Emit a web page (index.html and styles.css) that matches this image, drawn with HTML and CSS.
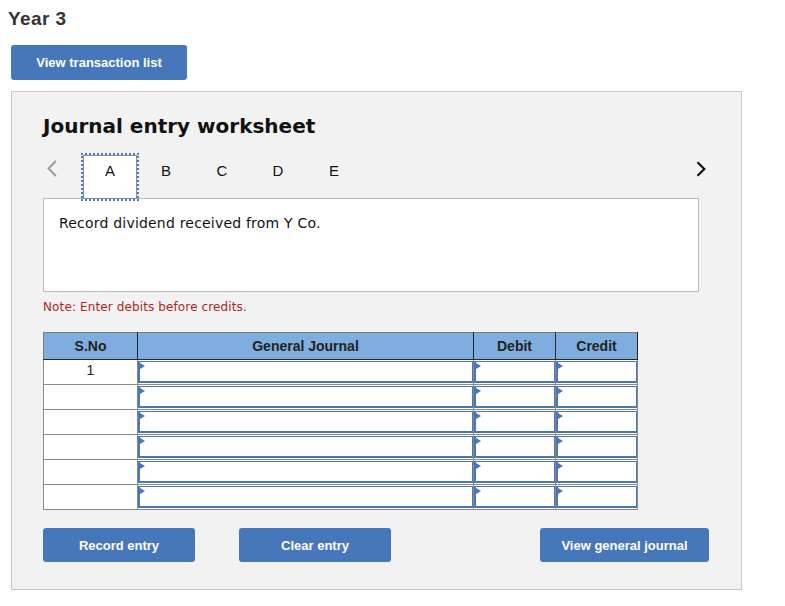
FILE: index.html
```html
<!DOCTYPE html>
<html>
<head>
<meta charset="utf-8">
<link rel="stylesheet" href="styles.css">
</head>
<body>
<div class="page">
  <h1 class="year">Year 3</h1>
  <button class="btn btn-list">View transaction list</button>
  <div class="panel">
    <h2 class="title">Journal entry worksheet</h2>
    <div class="tabs">
      <span class="arrow-left">
        <svg width="10" height="17" viewBox="0 0 10 17"><polyline points="8.8,1 1.6,8.5 8.8,16" fill="none" stroke="#9c9c9c" stroke-width="2"/></svg>
      </span>
      <div class="tab tab-active">A</div>
      <div class="tab">B</div>
      <div class="tab">C</div>
      <div class="tab">D</div>
      <div class="tab">E</div>
      <span class="arrow-right">
        <svg width="10" height="16" viewBox="0 0 10 16"><polyline points="1.5,1.2 8.3,8 1.5,14.8" fill="none" stroke="#111" stroke-width="2.2"/></svg>
      </span>
    </div>
    <div class="prompt">Record dividend received from Y Co.</div>
    <p class="note">Note: Enter debits before credits.</p>
    <table class="journal">
      <colgroup>
        <col class="col-sno">
        <col class="col-gj">
        <col class="col-amt">
        <col class="col-amt">
      </colgroup>
      <thead>
        <tr><th>S.No</th><th>General Journal</th><th>Debit</th><th>Credit</th></tr>
      </thead>
      <tbody>
        <tr><td class="sno">1</td><td><div class="entry"></div></td><td><div class="entry"></div></td><td><div class="entry"></div></td></tr>
        <tr><td class="sno"></td><td><div class="entry"></div></td><td><div class="entry"></div></td><td><div class="entry"></div></td></tr>
        <tr><td class="sno"></td><td><div class="entry"></div></td><td><div class="entry"></div></td><td><div class="entry"></div></td></tr>
        <tr><td class="sno"></td><td><div class="entry"></div></td><td><div class="entry"></div></td><td><div class="entry"></div></td></tr>
        <tr><td class="sno"></td><td><div class="entry"></div></td><td><div class="entry"></div></td><td><div class="entry"></div></td></tr>
        <tr><td class="sno"></td><td><div class="entry"></div></td><td><div class="entry"></div></td><td><div class="entry"></div></td></tr>
      </tbody>
    </table>
    <div class="actions">
      <button class="btn btn-record">Record entry</button>
      <button class="btn btn-clear">Clear entry</button>
      <button class="btn btn-journal">View general journal</button>
    </div>
  </div>
</div>
</body>
</html>
```

FILE: styles.css
```css
html, body {
  margin: 0;
  padding: 0;
  background: #ffffff;
}

.page {
  padding: 0 0 0 11px;
  font-family: "Liberation Sans", Arial, sans-serif;
  color: #222;
}

.year {
  margin: 7px 0 0 -3px;
  font-size: 19px;
  line-height: 24px;
  font-weight: bold;
  letter-spacing: 0.4px;
  color: #333;
}

.btn {
  display: block;
  border: none;
  padding: 0;
  margin: 0;
  background: #4677ba;
  color: #fff;
  font-family: "Liberation Sans", Arial, sans-serif;
  font-size: 13px;
  font-weight: bold;
  border-radius: 3px;
  text-align: center;
}

.btn-list {
  margin-top: 14px;
  width: 176px;
  height: 35px;
}

.panel {
  margin-top: 11px;
  width: 731px;
  box-sizing: border-box;
  background: #f2f2f2;
  border: 1px solid #c8c8c8;
  padding: 22px 42px 27px 31px;
}

.title {
  margin: 0;
  font-family: "DejaVu Sans", Verdana, sans-serif;
  font-size: 20px;
  line-height: 24px;
  font-weight: bold;
  color: #111;
}

.tabs {
  margin-top: 17px;
  display: flex;
  align-items: flex-start;
  height: 44px;
}

.arrow-left {
  display: block;
  width: 35px;
  padding: 5px 0 0 4px;
}

.arrow-left svg,
.arrow-right svg {
  display: block;
}

.tab {
  width: 54px;
  height: 44px;
  margin: 0 1px;
  box-sizing: border-box;
  border: 1px solid transparent;
  padding-top: 6px;
  text-align: center;
  font-size: 15px;
  line-height: 18px;
  color: #111;
}

.tab-active {
  position: relative;
  z-index: 1;
  background: #fff;
  border-color: #8a8a8a;
  outline: 2px dotted #4a7bc0;
}

.arrow-right {
  display: block;
  margin-left: auto;
  margin-right: -7px;
  padding-top: 6px;
}

.prompt {
  margin-top: -1px;
  height: 94px;
  box-sizing: border-box;
  background: #fff;
  border: 1px solid #b9b9b9;
  padding: 16px 15px 15px;
  font-family: "DejaVu Sans", Verdana, sans-serif;
  font-size: 14px;
  line-height: 17px;
  letter-spacing: 0.2px;
  color: #111;
}

.note {
  margin: 8px 0 0 0;
  font-family: "DejaVu Sans", Verdana, sans-serif;
  font-size: 12px;
  line-height: 15px;
  letter-spacing: 0.12px;
  color: #b3232c;
}

.journal {
  margin-top: 17px;
  border-collapse: collapse;
  table-layout: fixed;
  width: 595px;
  border: 1px solid #7a7a7a;
}

.col-sno { width: 94px; }
.col-gj { width: 336px; }
.col-amt { width: 82px; }

.journal th {
  height: 26px;
  padding: 0;
  background: #80ade0;
  border: 1px solid #262626;
  border-top: 1px solid #7a7a7a;
  font-size: 14px;
  font-weight: bold;
  color: #222;
  text-align: center;
  vertical-align: middle;
}

.journal th:first-child {
  border-left: 1px solid #7a7a7a;
}

.journal td {
  padding: 1px 0;
  height: 22px;
  background: #fff;
  border: 1px solid #8a8a8a;
  vertical-align: top;
}

.journal td.sno {
  text-align: center;
  font-size: 14px;
  line-height: 18px;
  color: #222;
}

.entry {
  position: relative;
  height: 22px;
  box-sizing: border-box;
  border: 1px solid #4a76b6;
  border-left-width: 2px;
  border-bottom-width: 2px;
  background: #fff;
}

.entry::before {
  content: "";
  position: absolute;
  left: 0;
  top: 1px;
  border-left: 5px solid #4a76b6;
  border-top: 3px solid transparent;
  border-bottom: 3px solid transparent;
}

.actions {
  margin-top: 18px;
  margin-right: -10px;
  display: flex;
}

.actions .btn {
  height: 34px;
}

.btn-record { width: 152px; }
.btn-clear { width: 152px; margin-left: 44px; }
.btn-journal { width: 169px; margin-left: auto; }
```
